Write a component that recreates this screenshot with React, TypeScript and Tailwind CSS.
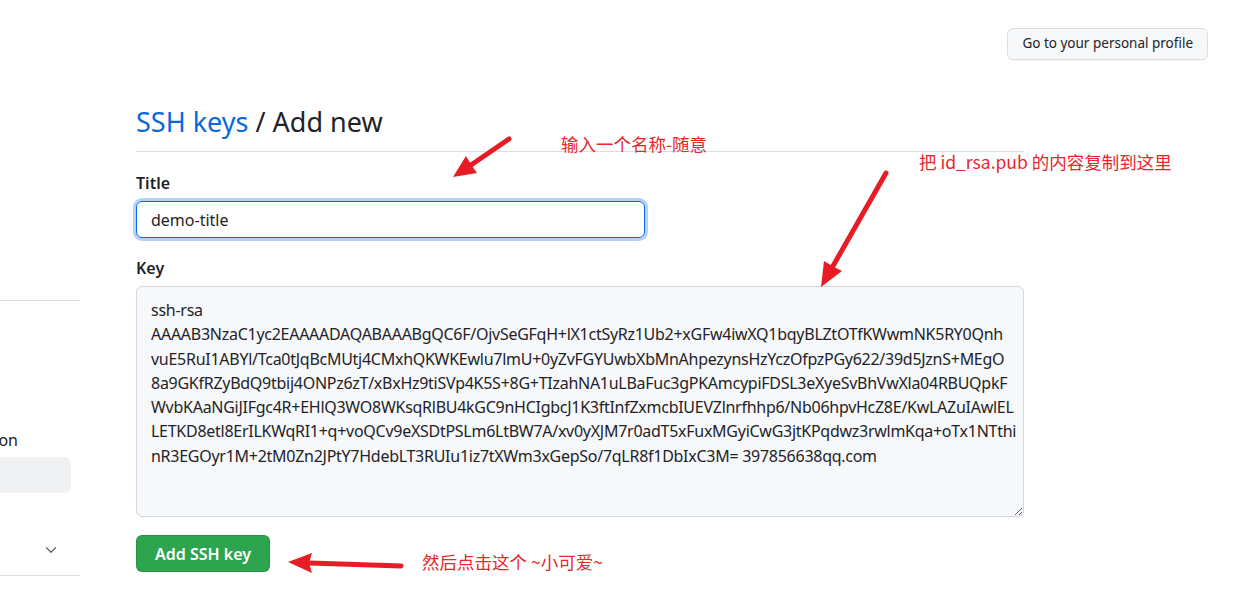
import React from 'react';
import { ChevronDown } from 'lucide-react';

const KEY_TEXT = [
  'ssh-rsa',
  'AAAAB3NzaC1yc2EAAAADAQABAAABgQC6F/OjvSeGFqH+lX1ctSyRz1Ub2+xGFw4iwXQ1bqyBLZtOTfKWwmNK5RY0Qnh',
  'vuE5RuI1ABYl/Tca0tJqBcMUtj4CMxhQKWKEwlu7lmU+0yZvFGYUwbXbMnAhpezynsHzYczOfpzPGy622/39d5JznS+MEgO',
  '8a9GKfRZyBdQ9tbij4ONPz6zT/xBxHz9tiSVp4K5S+8G+TIzahNA1uLBaFuc3gPKAmcypiFDSL3eXyeSvBhVwXla04RBUQpkF',
  'WvbKAaNGiJIFgc4R+EHlQ3WO8WKsqRlBU4kGC9nHCIgbcJ1K3ftInfZxmcbIUEVZlnrfhhp6/Nb06hpvHcZ8E/KwLAZuIAwlEL',
  'LETKD8etl8ErILKWqRI1+q+voQCv9eXSDtPSLm6LtBW7A/xv0yXJM7r0adT5xFuxMGyiCwG3jtKPqdwz3rwlmKqa+oTx1NTthi',
  'nR3EGOyr1M+2tM0Zn2JPtY7HdebLT3RUIu1iz7tXWm3xGepSo/7qLR8f1DbIxC3M= 397856638qq.com',
].join('\n');

const ui = "font-['Noto_Sans','Noto_Sans_CJK_SC',sans-serif]";
const cjk = "font-['Noto_Sans_CJK_SC',sans-serif]";

// red hand-drawn arrows on top of the screenshot
const Arrows: React.FC = () => (
  <svg className="pointer-events-none absolute inset-0" width={1240} height={607}>
    <g stroke="#e81c24" strokeWidth={5} strokeLinecap="round" fill="#e81c24">
      <line x1={509} y1={139} x2={471} y2={165} />
      <line x1={886} y1={173} x2={833} y2={266} />
      <line x1={401} y1={566} x2={310} y2={563} />
    </g>
    <g fill="#e81c24">
      <polygon points="453,177 477,173 472,166 466,156" />
      <polygon points="821,287 842,271 834,267 824,261" />
      <polygon points="288,562 312,553 309,563 312,573" />
    </g>
  </svg>
);

const App: React.FC = () => {
  return (
    <div className={`relative h-[607px] w-[1240px] overflow-hidden bg-white text-[#1f2328] ${ui}`}>
      <div className="flex justify-end pr-[32px] pt-[28px]">
        <button className="h-[32px] rounded-md border border-[#d8dee4] bg-[#f6f8fa] px-[14px] text-[13.5px] leading-none text-[#1f2328] shadow-[0_1px_0_rgba(31,35,40,0.04)]">
          Go to your personal profile
        </button>
      </div>

      <div className="flex">
        <aside className="w-[80px] shrink-0 overflow-hidden">
          <div className="h-[241px] border-b border-[#d8dee4]" />
          <div className="flex h-[152px] w-[18px] items-end justify-end whitespace-nowrap pb-[3px] text-[16px] leading-[20px]">
            Moderation
          </div>
          <div className="mt-[4px] h-[36px] w-[71px] rounded-r-md bg-[#eff1f3]" />
          <div className="flex h-[83px] items-end">
            <div className="flex h-[52px] w-[80px] items-center justify-end border-b border-[#d8dee4] pr-[20px]">
              <ChevronDown size={18} strokeWidth={1.6} className="text-[#59636e]" />
            </div>
          </div>
        </aside>

        <main className="ml-[56px] w-[888px]">
          <h1 className="mt-[44px] border-b border-[#d8dee4] pb-[11px] text-[27px] font-normal leading-[36px]">
            <a className="text-[#0969da]">SSH keys</a> / Add new
          </h1>

          <label className="mt-[21px] block text-[16px] font-semibold leading-[20px]">Title</label>
          <input
            readOnly
            value="demo-title"
            className="mt-[8px] h-[37px] w-[509px] rounded-md border border-[#0969da] px-[14px] text-[16px] text-[#1f2328] shadow-[0_0_0_3px_rgba(9,105,218,0.3)] outline-none"
          />

          <label className="mt-[20px] block text-[16px] font-semibold leading-[20px]">Key</label>
          <textarea
            readOnly
            wrap="off"
            value={KEY_TEXT}
            className="mt-[8px] block h-[231px] w-[888px] overflow-hidden rounded-md border border-[#d0d7de] bg-[#f6f8fa] px-[14px] pb-[12px] pt-[11px] text-[16px] leading-[24.3px] tracking-[-0.27px] text-[#1f2328] outline-none"
          />

          <button className="mt-[18px] h-[37px] rounded-md border border-[rgba(31,35,40,0.15)] bg-[#2da44e] px-[18px] text-[16px] font-semibold text-white">
            Add SSH key
          </button>
        </main>
      </div>

      <div className={`absolute left-[561px] top-[133px] text-[17.5px] leading-[22px] text-[#e8262c] ${cjk}`}>输入一个名称-随意</div>
      <div className={`absolute left-[919px] top-[151px] text-[17.5px] leading-[22px] text-[#e8262c] ${cjk}`}>把 id_rsa.pub 的内容复制到这里</div>
      <div className={`absolute left-[422px] top-[551px] text-[17.5px] leading-[22px] text-[#e8262c] ${cjk}`}>然后点击这个 ~小可爱~</div>

      <Arrows />
    </div>
  );
};

export default App;
